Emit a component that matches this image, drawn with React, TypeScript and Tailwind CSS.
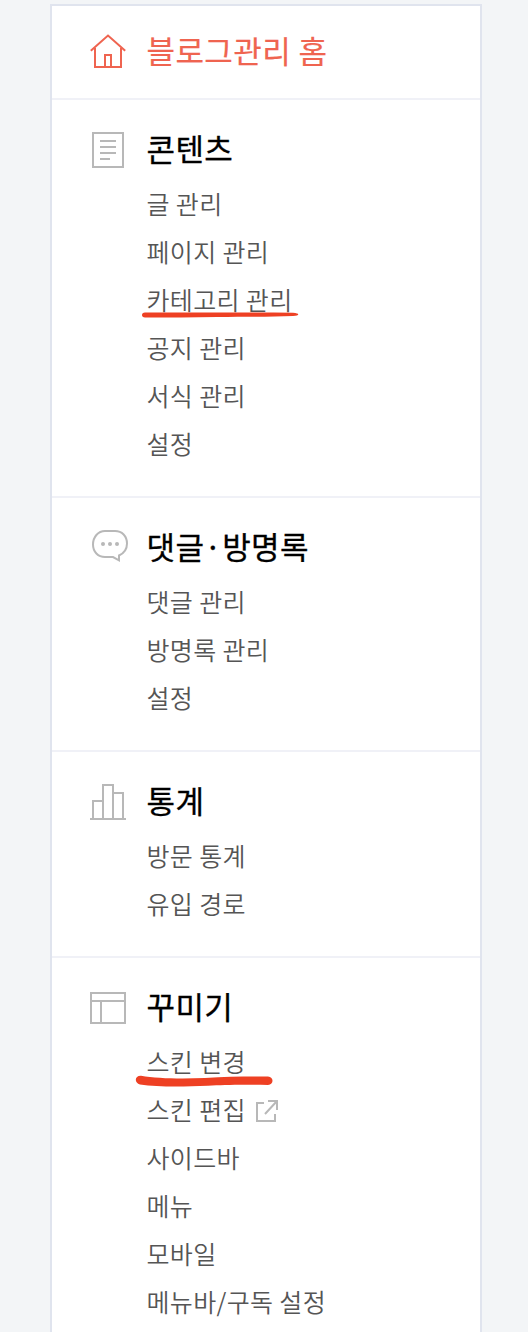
import type { ReactNode } from 'react';

type MenuItem = {
   label: string;
   external?: boolean;
   mark?: 'thin' | 'thick';
};

type MenuSection = {
   title: string;
   icon: ReactNode;
   items: MenuItem[];
};

function HomeIcon () {
   return (
      <svg width="40" height="40" viewBox="0 0 40 40" fill="none" stroke="#ef6450" strokeWidth="2">
         <path d="M2.8 18.8 20 3.600l17.2 15.2" />
         <path d="M7 16v19h26V16" />
         <path d="M17 35V23h6v12" />
      </svg>
   );
}

function ContentIcon () {
   return (
      <svg width="40" height="40" viewBox="0 0 40 40" fill="none" stroke="#b8b8b8" strokeWidth="2">
         <path d="M5 3h30v34H5z" />
         <path d="M12 11h16M12 17h16M12 23h16M12 29h10" />
      </svg>
   );
}

function CommentIcon () {
   return (
      <svg width="40" height="40" viewBox="0 0 40 40" fill="none" stroke="#b8b8b8" strokeWidth="2">
         <path d="M25 29h-8C10 29 5 23.8 5 16.500S10 3 17 3h10c7 0 12 5 12 12.500 0 5-2.500 9.500-8 12v4.800L25 29z" />
         <g fill="#b8b8b8" stroke="none">
            <circle cx="15" cy="16" r="2" />
            <circle cx="22" cy="16" r="2" />
            <circle cx="29" cy="16" r="2" />
         </g>
      </svg>
   );
}

function StatsIcon () {
   return (
      <svg width="40" height="40" viewBox="0 0 40 40" fill="none" stroke="#b8b8b8" strokeWidth="2">
         <path d="M2 37h36M5 37V19h10M15 37V3h10v34M25 11h10v26" />
      </svg>
   );
}

function SkinIcon () {
   return (
      <svg width="40" height="40" viewBox="0 0 40 40" fill="none" stroke="#b8b8b8" strokeWidth="2">
         <path d="M3 5h34v30H3zM3 13h34M13 13v22" />
      </svg>
   );
}

function ExternalIcon () {
   return (
      <svg width="22" height="22" viewBox="0 0 22 22" fill="none" stroke="#b8b8b8" strokeWidth="2">
         <path d="M8 3H1v18h18v-7" />
         <path d="M12 1h9v9M21 1 9 14" />
      </svg>
   );
}

// hand-drawn marker strokes under the highlighted items
function ThinMark () {
   return (
      <svg className="absolute -left-[5px] top-[36px]" width="158" height="8" viewBox="0 0 158 8" fill="#ee4023">
         <path d="M3 .5C50 .8 100 0 151 .8c7 .5 7 2.700 0 3.200C130 5 105 4.500 75 5 50 5.500 28 5.500 3 5.500-1 5.500-1 .5 3 .5z" />
      </svg>
   );
}

function ThickMark () {
   return (
      <svg className="absolute -left-[12px] top-[37px]" width="140" height="13" viewBox="0 0 140 13" fill="#ee4023">
         <path d="M6 .7C22 3.500 45 4 70 3c22-1.500 40-1.500 63-1.500 6 .5 6 8 0 8.500-30-.5-45 0-60 .8C45 12 22 12 5 9.500-1 8-.5.500 6 .7z" />
      </svg>
   );
}

const sections: MenuSection[] = [
   {
      title: '콘텐츠',
      icon: <ContentIcon />,
      items: [
         { label: '글 관리' },
         { label: '페이지 관리' },
         { label: '카테고리 관리', mark: 'thin' },
         { label: '공지 관리' },
         { label: '서식 관리' },
         { label: '설정' }
      ]
   },
   {
      title: '댓글·방명록',
      icon: <CommentIcon />,
      items: [
         { label: '댓글 관리' },
         { label: '방명록 관리' },
         { label: '설정' }
      ]
   },
   {
      title: '통계',
      icon: <StatsIcon />,
      items: [
         { label: '방문 통계' },
         { label: '유입 경로' }
      ]
   },
   {
      title: '꾸미기',
      icon: <SkinIcon />,
      items: [
         { label: '스킨 변경', mark: 'thick' },
         { label: '스킨 편집', external: true },
         { label: '사이드바' },
         { label: '메뉴' },
         { label: '모바일' },
         { label: '메뉴바/구독 설정' }
      ]
   }
];

function Section ({ title, icon, items }: MenuSection) {
   return (
      <section className="border-t-2 border-[#f0f1f7] pt-[30px] pb-7 pl-9">
         <div className="flex h-10 gap-[18.5px]">
            {icon}
            <h2 className="text-[31px] leading-9 tracking-[0.4px] text-black [-webkit-text-stroke:0.3px]">{title}</h2>
         </div>
         <ul className="mt-2.5 pl-[58.5px]">
            {items.map((item) => (
               <li key={item.label} className="relative flex h-12 items-center text-[25px] font-[350] tracking-[0.35px] text-[#555]">
                  <span className="h-12 leading-[46px]">{item.label}</span>
                  {item.external && <span className="mt-0.5 ml-[10.5px]"><ExternalIcon /></span>}
                  {item.mark === 'thin' && <ThinMark />}
                  {item.mark === 'thick' && <ThickMark />}
               </li>
            ))}
         </ul>
      </section>
   );
}

export default function App () {
   return (
      <div className="h-[1332px] overflow-hidden bg-[#f3f5f7] pt-1 font-['Noto_Sans_CJK_KR',sans-serif]">
         <nav className="ml-[50px] w-[432px] border-2 border-[#e0e4ee] bg-white">
            <div className="flex h-[92px] items-center gap-[18.5px] pl-9">
               <HomeIcon />
               <span className="h-10 text-[31px] leading-9 tracking-[0.4px] text-[#ef6450] [-webkit-text-stroke:0.2px]">블로그관리 홈</span>
            </div>
            {sections.map((section) => (
               <Section key={section.title} {...section} />
            ))}
         </nav>
      </div>
   );
}
